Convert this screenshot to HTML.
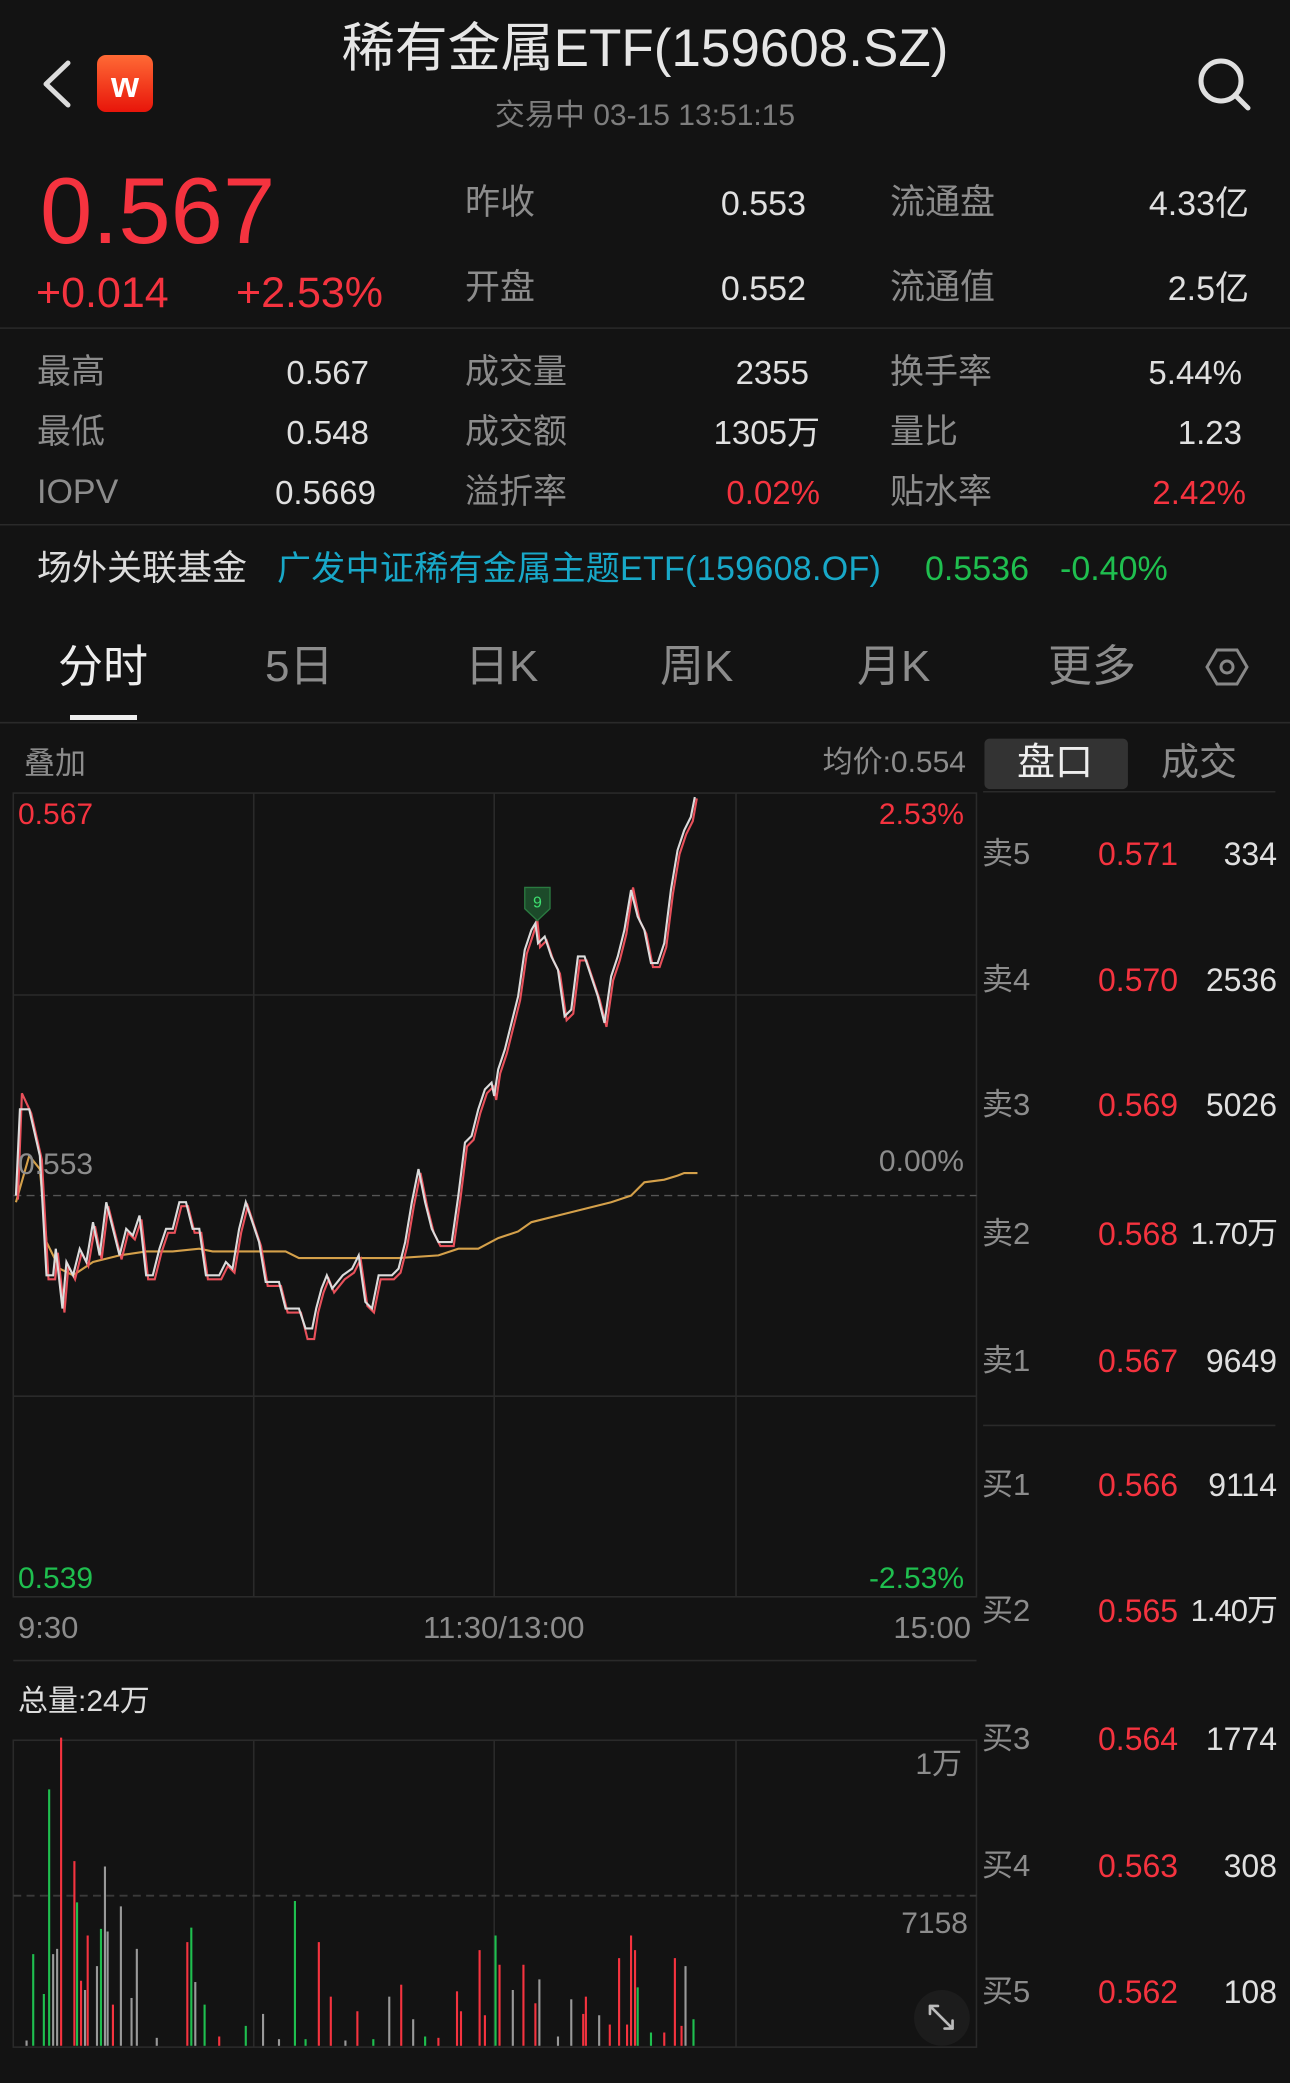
<!DOCTYPE html>
<html><head><meta charset="utf-8">
<style>
html,body{margin:0;padding:0;background:#131313;}
body{width:1290px;height:2083px;position:relative;overflow:hidden;font-family:"Liberation Sans","Noto Sans CJK SC",sans-serif;color:#e0e0e0;}
.t{position:absolute;white-space:nowrap;line-height:1;}
.g{color:#8c8c8c;}
.r{color:#f5333f;}
.gr{color:#1fbf4f;}
svg{position:absolute;left:0;top:0;}
</style></head><body>
<svg width="1290" height="2083" viewBox="0 0 971 1568" preserveAspectRatio="none">
<g stroke="#2a2a2a" stroke-width="1.2" fill="none">
<line x1="0" y1="247" x2="971" y2="247"/>
<line x1="0" y1="395" x2="971" y2="395"/>
<line x1="0" y1="544" x2="971" y2="544"/>
<rect x="10" y="597" width="725" height="605"/>
<line x1="191" y1="597" x2="191" y2="1202"/><line x1="372" y1="597" x2="372" y2="1202"/><line x1="554" y1="597" x2="554" y2="1202"/>
<line x1="10" y1="749" x2="735" y2="749"/><line x1="10" y1="1051" x2="735" y2="1051"/>
<line x1="10" y1="1250" x2="735" y2="1250"/>
<rect x="10" y="1310" width="725" height="231"/>
<line x1="191" y1="1310" x2="191" y2="1541"/><line x1="372" y1="1310" x2="372" y2="1541"/><line x1="554" y1="1310" x2="554" y2="1541"/>
<line x1="740" y1="596" x2="960" y2="596"/>
<line x1="740" y1="1073" x2="960" y2="1073"/>
</g>
<line x1="10" y1="900" x2="735" y2="900" stroke="#555" stroke-width="1" stroke-dasharray="6,4"/>
<line x1="10" y1="1427" x2="735" y2="1427" stroke="#3a3a3a" stroke-width="1.5" stroke-dasharray="6,4"/>
<rect x="741" y="556" width="108" height="38" rx="4" fill="#333"/>
<polyline fill="none" stroke="#d4a04a" stroke-width="1.6" points="12,905 22,870 30,880 35,935 45,955 55,960 70,950 90,945 110,942 130,942 150,940 160,942 215,942 225,947 300,947 330,945 345,940 360,940 375,932 390,927 400,920 420,915 440,910 460,905 475,900 485,890 500,888 510,885 515,883 525,883"/>
<g transform="translate(1.5,3)">
<polyline fill="none" stroke="#e8505a" stroke-width="1.6" points="12,900 15,820 22,835 30,870 35,960 40,960 42,940 47,985 50,950 55,960 60,940 65,950 70,920 75,945 80,905 85,925 90,945 95,925 100,930 105,915 110,960 115,960 120,940 125,925 130,925 135,905 140,905 145,925 150,925 155,960 165,960 170,950 175,955 180,925 185,905 190,920 195,935 200,965 210,965 215,985 225,985 230,1005 235,1005 238,985 242,970 246,960 250,970 258,960 265,955 270,945 275,980 280,985 285,960 295,960 300,955 305,935 310,905 315,880 320,905 325,925 330,935 340,935 345,900 350,860 355,855 360,835 365,820 370,815 372,825 375,805 380,790 385,770 390,750 395,715 400,700 403,690 405,710 410,705 415,720 420,730 425,765 430,760 435,720 440,720 445,735 450,750 455,770 460,735 465,720 470,700 475,665 480,690 485,700 490,725 495,725 500,710 505,670 510,640 515,625 520,615 523,598"/>
</g>
<polyline fill="none" stroke="#dcdcdc" stroke-width="1.6" points="12,900 15,835 22,835 30,870 35,960 40,960 42,940 47,985 50,950 55,960 60,940 65,950 70,920 75,945 80,905 85,925 90,945 95,925 100,930 105,915 110,960 115,960 120,940 125,925 130,925 135,905 140,905 145,925 150,925 155,960 165,960 170,950 175,955 180,925 185,905 190,920 195,935 200,965 210,965 215,985 225,985 230,1000 235,1000 238,985 242,970 246,960 250,970 258,960 265,955 270,945 275,980 280,985 285,960 295,960 300,955 305,935 310,905 315,880 320,905 325,925 330,935 340,935 345,900 350,860 355,855 360,835 365,820 370,815 372,825 375,805 380,790 385,770 390,750 395,715 400,700 403,695 405,710 410,705 415,720 420,730 425,765 430,760 435,720 440,720 445,735 450,750 455,770 460,735 465,720 470,700 475,670 480,690 485,700 490,725 495,725 500,710 505,670 510,640 515,625 520,615 523,600"/>
<path d="M395,668 H414 V684 L404.5,693 L395,684 Z" fill="#1c4a2a" stroke="#2a7a40" stroke-width="1"/>
<text x="404.5" y="683" font-size="12" fill="#3ee070" text-anchor="middle" font-family="Liberation Sans">9</text>
<g stroke-width="1.6">
<line x1="46" y1="1540" x2="46" y2="1308" stroke="#f5333f"/>
<line x1="37" y1="1540" x2="37" y2="1347" stroke="#1fbf4f"/>
<line x1="56" y1="1540" x2="56" y2="1401" stroke="#f5333f"/>
<line x1="79" y1="1540" x2="79" y2="1405" stroke="#999"/>
<line x1="58" y1="1540" x2="58" y2="1432" stroke="#1fbf4f"/>
<line x1="91" y1="1540" x2="91" y2="1435" stroke="#999"/>
<line x1="103" y1="1540" x2="103" y2="1467" stroke="#999"/>
<line x1="144" y1="1540" x2="144" y2="1451" stroke="#1fbf4f"/>
<line x1="141" y1="1540" x2="141" y2="1462" stroke="#f5333f"/>
<line x1="222" y1="1540" x2="222" y2="1431" stroke="#1fbf4f"/>
<line x1="240" y1="1540" x2="240" y2="1462" stroke="#f5333f"/>
<line x1="361" y1="1540" x2="361" y2="1468" stroke="#f5333f"/>
<line x1="373" y1="1540" x2="373" y2="1457" stroke="#1fbf4f"/>
<line x1="376" y1="1540" x2="376" y2="1479" stroke="#f5333f"/>
<line x1="394" y1="1540" x2="394" y2="1479" stroke="#f5333f"/>
<line x1="406" y1="1540" x2="406" y2="1490" stroke="#999"/>
<line x1="466" y1="1540" x2="466" y2="1474" stroke="#f5333f"/>
<line x1="475" y1="1540" x2="475" y2="1457" stroke="#f5333f"/>
<line x1="478" y1="1540" x2="478" y2="1468" stroke="#f5333f"/>
<line x1="480" y1="1540" x2="480" y2="1496" stroke="#1fbf4f"/>
<line x1="508" y1="1540" x2="508" y2="1474" stroke="#f5333f"/>
<line x1="516" y1="1540" x2="516" y2="1480" stroke="#999"/>
<line x1="522" y1="1540" x2="522" y2="1520" stroke="#1fbf4f"/>
<line x1="25" y1="1540" x2="25" y2="1471" stroke="#1fbf4f"/>
<line x1="33" y1="1540" x2="33" y2="1501" stroke="#1fbf4f"/>
<line x1="40" y1="1540" x2="40" y2="1471" stroke="#999"/>
<line x1="43" y1="1540" x2="43" y2="1467" stroke="#999"/>
<line x1="66" y1="1540" x2="66" y2="1457" stroke="#f5333f"/>
<line x1="76" y1="1540" x2="76" y2="1452" stroke="#1fbf4f"/>
<line x1="81" y1="1540" x2="81" y2="1454" stroke="#999"/>
<line x1="61" y1="1540" x2="61" y2="1491" stroke="#f5333f"/>
<line x1="64" y1="1540" x2="64" y2="1498" stroke="#999"/>
<line x1="73" y1="1540" x2="73" y2="1480" stroke="#999"/>
<line x1="99" y1="1540" x2="99" y2="1504" stroke="#999"/>
<line x1="85" y1="1540" x2="85" y2="1509" stroke="#f5333f"/>
<line x1="147" y1="1540" x2="147" y2="1492" stroke="#999"/>
<line x1="154" y1="1540" x2="154" y2="1509" stroke="#1fbf4f"/>
<line x1="198" y1="1540" x2="198" y2="1516" stroke="#999"/>
<line x1="185" y1="1540" x2="185" y2="1525" stroke="#1fbf4f"/>
<line x1="249" y1="1540" x2="249" y2="1503" stroke="#f5333f"/>
<line x1="269" y1="1540" x2="269" y2="1514" stroke="#f5333f"/>
<line x1="293" y1="1540" x2="293" y2="1503" stroke="#999"/>
<line x1="302" y1="1540" x2="302" y2="1494" stroke="#f5333f"/>
<line x1="311" y1="1540" x2="311" y2="1520" stroke="#999"/>
<line x1="344" y1="1540" x2="344" y2="1499" stroke="#f5333f"/>
<line x1="347" y1="1540" x2="347" y2="1514" stroke="#f5333f"/>
<line x1="365" y1="1540" x2="365" y2="1517" stroke="#f5333f"/>
<line x1="386" y1="1540" x2="386" y2="1498" stroke="#999"/>
<line x1="403" y1="1540" x2="403" y2="1508" stroke="#f5333f"/>
<line x1="430" y1="1540" x2="430" y2="1505" stroke="#999"/>
<line x1="441" y1="1540" x2="441" y2="1503" stroke="#f5333f"/>
<line x1="439" y1="1540" x2="439" y2="1516" stroke="#f5333f"/>
<line x1="459" y1="1540" x2="459" y2="1524" stroke="#f5333f"/>
<line x1="472" y1="1540" x2="472" y2="1524" stroke="#f5333f"/>
<line x1="451" y1="1540" x2="451" y2="1517" stroke="#999"/>
<line x1="500" y1="1540" x2="500" y2="1530" stroke="#f5333f"/>
<line x1="513" y1="1540" x2="513" y2="1525" stroke="#f5333f"/>
<line x1="490" y1="1540" x2="490" y2="1530" stroke="#1fbf4f"/>
<line x1="20" y1="1540" x2="20" y2="1536" stroke="#999"/>
<line x1="118" y1="1540" x2="118" y2="1534" stroke="#999"/>
<line x1="165" y1="1540" x2="165" y2="1533" stroke="#f5333f"/>
<line x1="210" y1="1540" x2="210" y2="1535" stroke="#999"/>
<line x1="230" y1="1540" x2="230" y2="1535" stroke="#1fbf4f"/>
<line x1="260" y1="1540" x2="260" y2="1536" stroke="#999"/>
<line x1="281" y1="1540" x2="281" y2="1535" stroke="#1fbf4f"/>
<line x1="320" y1="1540" x2="320" y2="1533" stroke="#1fbf4f"/>
<line x1="330" y1="1540" x2="330" y2="1534" stroke="#f5333f"/>
<line x1="420" y1="1540" x2="420" y2="1533" stroke="#999"/>
</g>
<circle cx="709" cy="1519" r="21" fill="#1c1c1c"/>
<g stroke="#bbb" stroke-width="2" fill="none" stroke-linecap="round"><path d="M700,1510 L717,1527 M700,1510 h6 M700,1510 v6 M717,1527 h-6 M717,1527 v-6"/></g>
</svg>

<svg width="1290" height="140" viewBox="0 0 1290 140">
<polyline points="68,63 46,84 68,105" fill="none" stroke="#dcdcdc" stroke-width="5" stroke-linecap="round" stroke-linejoin="round"/>
<defs><linearGradient id="lg" x1="0" y1="0" x2="0" y2="1"><stop offset="0" stop-color="#ff6a35"/><stop offset="1" stop-color="#e8150a"/></linearGradient></defs>
<rect x="97" y="55" width="56" height="57" rx="9" fill="url(#lg)"/>
<text x="125" y="97" font-size="36" font-weight="bold" fill="#fff" text-anchor="middle" font-family="Liberation Sans">w</text>
<circle cx="1221" cy="81" r="20" fill="none" stroke="#e0e0e0" stroke-width="5"/>
<line x1="1235" y1="95" x2="1248" y2="108" stroke="#e0e0e0" stroke-width="5" stroke-linecap="round"/>
</svg>
<svg width="1290" height="720" viewBox="0 0 1290 720">
<polygon points="1207,667 1217,650 1237,650 1247,667 1237,684 1217,684" fill="none" stroke="#888" stroke-width="3"/>
<circle cx="1227" cy="667" r="6" fill="none" stroke="#888" stroke-width="3"/>
<rect x="70" y="715" width="67" height="5" fill="#eee"/>
</svg>

<div class="t" style="left:0;width:1290px;text-align:center;top:22px;font-size:53px;color:#e6e6e6">稀有金属ETF(159608.SZ)</div>
<div class="t g" style="left:0;width:1290px;text-align:center;top:101px;font-size:30px;color:#7e7e7e">交易中 03-15 13:51:15</div>

<div class="t r" style="left:40px;top:164px;font-size:94px">0.567</div>
<div class="t r" style="left:36px;top:272px;font-size:43px">+0.014</div>
<div class="t r" style="left:236px;top:272px;font-size:43px">+2.53%</div>

<div class="t g" style="left:465px;top:185px;font-size:35px">昨收</div>
<div class="t" style="right:484px;top:187px;font-size:34px">0.553</div>
<div class="t g" style="left:890px;top:185px;font-size:35px">流通盘</div>
<div class="t" style="right:41px;top:187px;font-size:34px">4.33亿</div>
<div class="t g" style="left:465px;top:270px;font-size:35px">开盘</div>
<div class="t" style="right:484px;top:272px;font-size:34px">0.552</div>
<div class="t g" style="left:890px;top:270px;font-size:35px">流通值</div>
<div class="t" style="right:41px;top:272px;font-size:34px">2.5亿</div>

<div class="t g" style="left:37px;top:355px;font-size:34px">最高</div>
<div class="t" style="right:921px;top:356px;font-size:33px">0.567</div>
<div class="t g" style="left:465px;top:355px;font-size:34px">成交量</div>
<div class="t" style="right:481px;top:356px;font-size:33px">2355</div>
<div class="t g" style="left:890px;top:355px;font-size:34px">换手率</div>
<div class="t" style="right:48px;top:356px;font-size:33px">5.44%</div>

<div class="t g" style="left:37px;top:415px;font-size:34px">最低</div>
<div class="t" style="right:921px;top:416px;font-size:33px">0.548</div>
<div class="t g" style="left:465px;top:415px;font-size:34px">成交额</div>
<div class="t" style="right:470px;top:416px;font-size:33px">1305万</div>
<div class="t g" style="left:890px;top:415px;font-size:34px">量比</div>
<div class="t" style="right:48px;top:416px;font-size:33px">1.23</div>

<div class="t g" style="left:37px;top:475px;font-size:34px">IOPV</div>
<div class="t" style="right:914px;top:476px;font-size:33px">0.5669</div>
<div class="t g" style="left:465px;top:475px;font-size:34px">溢折率</div>
<div class="t r" style="right:470px;top:476px;font-size:33px">0.02%</div>
<div class="t g" style="left:890px;top:475px;font-size:34px">贴水率</div>
<div class="t r" style="right:44px;top:476px;font-size:33px">2.42%</div>

<div class="t" style="left:37px;top:551px;font-size:35px;color:#dcdcdc">场外关联基金</div>
<div class="t" style="left:277px;top:552px;font-size:34px;color:#18a8c8;letter-spacing:0.3px">广发中证稀有金属主题ETF(159608.OF)</div>
<div class="t gr" style="left:925px;top:552px;font-size:34px">0.5536</div>
<div class="t gr" style="left:1060px;top:552px;font-size:34px">-0.40%</div>

<div class="t" style="left:58px;top:644px;font-size:45px;color:#eee">分时</div>
<div class="t g" style="left:265px;top:645px;font-size:44px">5日</div>
<div class="t g" style="left:465px;top:645px;font-size:44px">日K</div>
<div class="t g" style="left:660px;top:645px;font-size:44px">周K</div>
<div class="t g" style="left:857px;top:645px;font-size:44px">月K</div>
<div class="t g" style="left:1048px;top:645px;font-size:44px">更多</div>

<div class="t g" style="left:24px;top:748px;font-size:31px">叠加</div>
<div class="t g" style="right:324px;top:748px;font-size:30px">均价:0.554</div>
<div class="t" style="left:1017px;top:744px;font-size:38px;color:#eee">盘口</div>
<div class="t g" style="left:1161px;top:744px;font-size:38px">成交</div>

<div class="t r" style="left:18px;top:800px;font-size:30px">0.567</div>
<div class="t r" style="right:326px;top:800px;font-size:30px">2.53%</div>
<div class="t g" style="left:18px;top:1150px;font-size:30px">0.553</div>
<div class="t g" style="right:326px;top:1147px;font-size:30px">0.00%</div>
<div class="t gr" style="left:18px;top:1564px;font-size:30px">0.539</div>
<div class="t gr" style="right:326px;top:1564px;font-size:30px">-2.53%</div>
<div class="t g" style="left:18px;top:1612px;font-size:31px">9:30</div>
<div class="t g" style="left:423px;top:1612px;font-size:31px">11:30/13:00</div>
<div class="t g" style="right:319px;top:1612px;font-size:31px">15:00</div>
<div class="t" style="left:18px;top:1687px;font-size:30px;color:#ddd">总量:24万</div>
<div class="t g" style="right:328px;top:1750px;font-size:30px">1万</div>
<div class="t g" style="right:322px;top:1909px;font-size:30px">7158</div>

<div class="t g" style="left:982px;top:838px;font-size:31px">卖5</div><div class="t r" style="left:1098px;top:838px;font-size:32px">0.571</div><div class="t" style="right:13px;top:838px;font-size:32px">334</div>
<div class="t g" style="left:982px;top:964px;font-size:31px">卖4</div><div class="t r" style="left:1098px;top:964px;font-size:32px">0.570</div><div class="t" style="right:13px;top:964px;font-size:32px">2536</div>
<div class="t g" style="left:982px;top:1089px;font-size:31px">卖3</div><div class="t r" style="left:1098px;top:1089px;font-size:32px">0.569</div><div class="t" style="right:13px;top:1089px;font-size:32px">5026</div>
<div class="t g" style="left:982px;top:1218px;font-size:31px">卖2</div><div class="t r" style="left:1098px;top:1218px;font-size:32px">0.568</div><div class="t" style="right:13px;top:1218px;font-size:31px;letter-spacing:-1px">1.70万</div>
<div class="t g" style="left:982px;top:1345px;font-size:31px">卖1</div><div class="t r" style="left:1098px;top:1345px;font-size:32px">0.567</div><div class="t" style="right:13px;top:1345px;font-size:32px">9649</div>
<div class="t g" style="left:982px;top:1469px;font-size:31px">买1</div><div class="t r" style="left:1098px;top:1469px;font-size:32px">0.566</div><div class="t" style="right:13px;top:1469px;font-size:32px">9114</div>
<div class="t g" style="left:982px;top:1595px;font-size:31px">买2</div><div class="t r" style="left:1098px;top:1595px;font-size:32px">0.565</div><div class="t" style="right:13px;top:1595px;font-size:31px;letter-spacing:-1px">1.40万</div>
<div class="t g" style="left:982px;top:1723px;font-size:31px">买3</div><div class="t r" style="left:1098px;top:1723px;font-size:32px">0.564</div><div class="t" style="right:13px;top:1723px;font-size:32px">1774</div>
<div class="t g" style="left:982px;top:1850px;font-size:31px">买4</div><div class="t r" style="left:1098px;top:1850px;font-size:32px">0.563</div><div class="t" style="right:13px;top:1850px;font-size:32px">308</div>
<div class="t g" style="left:982px;top:1976px;font-size:31px">买5</div><div class="t r" style="left:1098px;top:1976px;font-size:32px">0.562</div><div class="t" style="right:13px;top:1976px;font-size:32px">108</div>
</body></html>
